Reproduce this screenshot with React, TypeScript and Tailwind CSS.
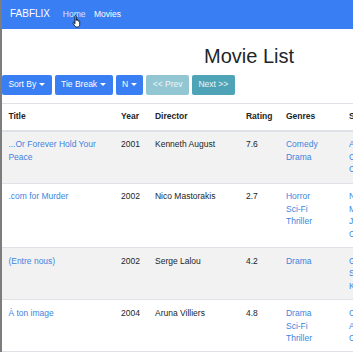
import React from 'react'

type Movie = {
  title: string
  year: number
  director: string
  rating: string
  genres: string[]
  stars: string[]
}

const movies: Movie[] = [
  {
    title: '...Or Forever Hold Your Peace',
    year: 2001,
    director: 'Kenneth August',
    rating: '7.6',
    genres: ['Comedy', 'Drama'],
    stars: ['Alan Ruck', 'Cheryl Ladd', 'Craig Sheffer'],
  },
  {
    title: '.com for Murder',
    year: 2002,
    director: 'Nico Mastorakis',
    rating: '2.7',
    genres: ['Horror', 'Sci-Fi', 'Thriller'],
    stars: ['Nastassja Kinski', 'Melinda Clarke', 'Jennifer Tilly', 'Chris Penn'],
  },
  {
    title: '(Entre nous)',
    year: 2002,
    director: 'Serge Lalou',
    rating: '4.2',
    genres: ['Drama'],
    stars: ['Guillaume Canet', 'Sophie Marceau', 'Karin Viard'],
  },
  {
    title: 'À ton image',
    year: 2004,
    director: 'Aruna Villiers',
    rating: '4.8',
    genres: ['Drama', 'Sci-Fi', 'Thriller'],
    stars: ['Christian Vadim', 'Anne Brochet', 'Clotilde Courau'],
  },
  {
    title: 'Ab-normal Beauty',
    year: 2004,
    director: 'Oxide Pang Chun',
    rating: '6.1',
    genres: ['Horror'],
    stars: ['Race Wong', 'Rosanne Wong'],
  },
]

function Caret() {
  return (
    <span className="inline-block w-0 h-0 ml-[3px] align-middle border-t-[3px] border-x-[3px] border-x-transparent border-t-white" />
  )
}

function HandCursor() {
  return (
    <svg className="absolute left-[70px] top-[15px]" width="11" height="13" viewBox="0 0 11 13">
      <path
        d="M3 1.2c0-.7 1.2-.7 1.2 0v4.3l.2-1c.2-.6 1.1-.5 1.1.1v.9c.2-.6 1.1-.5 1.1.1v.8c.2-.5 1.1-.4 1.1.2v3c0 1.3-.8 2.4-2 2.4H4.6c-.8 0-1.3-.4-1.8-1.1L1 8.3c-.4-.6.4-1.2.9-.7L3 8.7z"
        fill="#fff"
        stroke="#000"
        strokeWidth="0.8"
        strokeLinejoin="round"
      />
    </svg>
  )
}

export default function App() {
  const cell = 'px-[6.4px] py-[6.4px] border-t border-[#dee2e6] align-top'
  return (
    <div className="w-[353px] h-[352px] overflow-hidden bg-white border-l-2 border-[#7d7d7d] font-['Liberation_Sans',Arial,sans-serif] text-[#212529] text-[8.5px] leading-[12.75px]">
      <nav className="relative h-[29px] bg-[#3a7ef3] flex items-center pl-[8px]">
        <span className="text-[10px] text-white mr-[8.5px]">FABFLIX</span>
        <a className="px-[4.25px] text-white/80">Home</a>
        <a className="px-[4.25px] text-white">Movies</a>
        <HandCursor />
      </nav>

      <div className="pt-[15px] pl-[202px]">
        <h1 className="text-[20px] leading-[24px] font-normal">Movie List</h1>
      </div>

      <div className="mt-[7px] flex gap-[3px]">
        <button className="h-[19.6px] px-[6.4px] rounded-[2px] bg-[#3a7ef3] text-white flex items-center">
          Sort By<Caret />
        </button>
        <button className="h-[19.6px] px-[6.4px] rounded-[2px] bg-[#3a7ef3] text-white flex items-center">
          Tie Break<Caret />
        </button>
        <button className="h-[19.6px] px-[6.4px] rounded-[2px] bg-[#3a7ef3] text-white flex items-center">
          N<Caret />
        </button>
        <button className="h-[19.6px] px-[6.4px] rounded-[2px] bg-[#92c6d2] text-white/85 flex items-center">
          &lt;&lt; Prev
        </button>
        <button className="h-[19.6px] px-[6.4px] rounded-[2px] bg-[#4fa3b6] text-white/90 flex items-center">
          Next &gt;&gt;
        </button>
      </div>

      <table className="mt-[8.4px] w-[480px] table-fixed border-collapse text-left">
        <colgroup>
          <col className="w-[112.6px]" />
          <col className="w-[34px]" />
          <col className="w-[91px]" />
          <col className="w-[40px]" />
          <col className="w-[63px]" />
          <col />
        </colgroup>
        <thead>
          <tr>
            {['Title', 'Year', 'Director', 'Rating', 'Genres', 'Stars'].map((h) => (
              <th key={h} className="px-[6.4px] py-[6.4px] border-t border-b-2 border-[#dee2e6] font-bold align-bottom">
                {h}
              </th>
            ))}
          </tr>
        </thead>
        <tbody>
          {movies.map((m, i) => (
            <tr key={m.title} className={i % 2 === 0 ? 'bg-[#f2f2f2]' : ''}>
              <td className={cell}>
                <a className="text-[#3d84de]">{m.title}</a>
              </td>
              <td className={cell}>{m.year}</td>
              <td className={cell}>{m.director}</td>
              <td className={cell}>{m.rating}</td>
              <td className={cell}>
                {m.genres.map((g) => (
                  <a key={g} className="block text-[#3d84de]">{g}</a>
                ))}
              </td>
              <td className={cell + ' whitespace-nowrap'}>
                {m.stars.map((s) => (
                  <a key={s} className="block text-[#3d84de]">{s}</a>
                ))}
              </td>
            </tr>
          ))}
        </tbody>
      </table>
    </div>
  )
}
